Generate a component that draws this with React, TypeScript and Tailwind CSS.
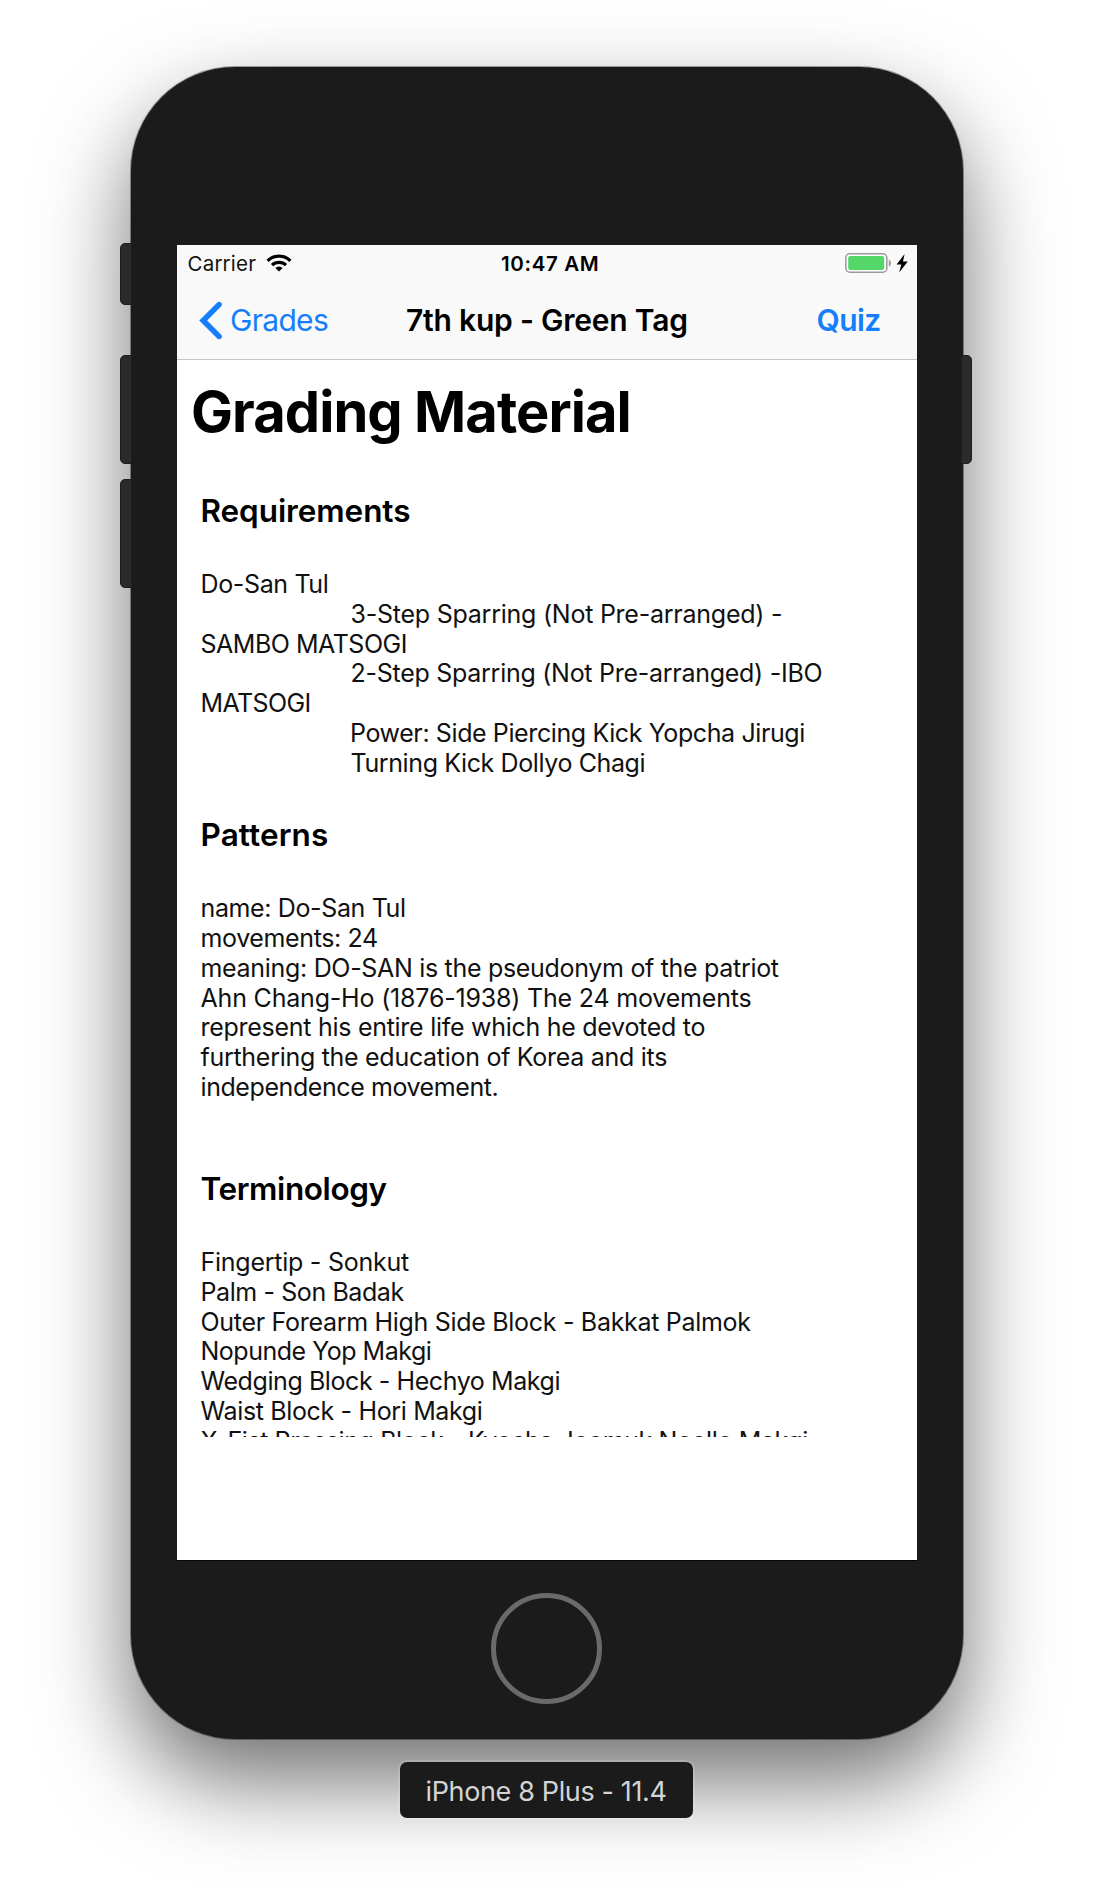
type Line = { text: string; className: string };

const requirements: Line[] = [
  { text: 'Do-San Tul', className: 'tracking-[-0.354px]' },
  { text: '3-Step Sparring (Not Pre-arranged) -', className: 'pl-[150px] tracking-[-0.239px]' },
  { text: 'SAMBO MATSOGI', className: 'tracking-[-0.486px]' },
  { text: '2-Step Sparring (Not Pre-arranged) -IBO', className: 'pl-[150px] tracking-[-0.27px]' },
  { text: 'MATSOGI', className: 'tracking-[-0.6px]' },
  { text: 'Power: Side Piercing Kick Yopcha Jirugi', className: 'pl-[149.5px] tracking-[-0.395px]' },
  { text: 'Turning Kick Dollyo Chagi', className: 'pl-[150px] tracking-[-0.391px]' },
];

const patterns: Line[] = [
  { text: 'name: Do-San Tul', className: 'tracking-[-0.367px]' },
  { text: 'movements: 24', className: 'tracking-[-0.375px]' },
  { text: 'meaning: DO-SAN is the pseudonym of the patriot', className: 'tracking-[-0.31px]' },
  { text: 'Ahn Chang-Ho (1876-1938) The 24 movements', className: 'tracking-[-0.191px]' },
  { text: 'represent his entire life which he devoted to', className: 'tracking-[-0.277px]' },
  { text: 'furthering the education of Korea and its', className: 'tracking-[-0.29px]' },
  { text: 'independence movement.', className: 'tracking-[-0.422px]' },
];

const terminology: Line[] = [
  { text: 'Fingertip - Sonkut', className: 'tracking-[-0.25px]' },
  { text: 'Palm - Son Badak', className: 'tracking-[-0.406px]' },
  { text: 'Outer Forearm High Side Block - Bakkat Palmok', className: 'tracking-[-0.3px]' },
  { text: 'Nopunde Yop Makgi', className: 'tracking-[-0.49px]' },
  { text: 'Wedging Block - Hechyo Makgi', className: 'tracking-[-0.418px]' },
  { text: 'Waist Block - Hori Makgi', className: 'tracking-[-0.35px]' },
  { text: 'X-Fist Pressing Block - Kyocha Joomuk Noollo Makgi', className: 'tracking-[-0.4px]' },
];

function Section({ title, lines, className, tracking }: { title: string; lines: Line[]; className: string; tracking: string }) {
  return (
    <section className={className}>
      <h2 className={`pl-[23.5px] text-[31.5px] leading-[40px] font-semibold ${tracking}`}>{title}</h2>
      <div className="mt-[38.9px] pl-[23.5px] text-[25px] leading-[29.8px] text-[#111]">
        {lines.map((line) => (
          <p key={line.text} className={`whitespace-nowrap ${line.className}`}>
            {line.text}
          </p>
        ))}
      </div>
    </section>
  );
}

function StatusBar() {
  return (
    <div className="flex h-[40px] items-start pt-[6px] text-[20.5px] leading-[26px] whitespace-nowrap">
      <span className="w-[79px] pl-[10.5px] tracking-[0.2px] text-[#111]">Carrier</span>
      <svg className="mt-[2.5px] ml-[10px] h-[18px] w-[26px]" viewBox="0 0 26 18" fill="none" stroke="#000">
        <path d="M1.6 6.8a16.2 16.2 0 0 1 22.8 0" strokeWidth="3.3" />
        <path d="M6 11.2a10 10 0 0 1 14 0" strokeWidth="3.2" />
        <path d="M13 17.6 9.3 13.9a5.3 5.3 0 0 1 7.4 0Z" fill="#000" stroke="none" />
      </svg>
      <span className="ml-[209px] w-[110px] font-semibold tracking-[0.65px]">10:47 AM</span>
      <svg className="mt-[2px] ml-[233.5px] h-[20px] w-[47px]" viewBox="0 0 47 20">
        <rect x="0.8" y="0.8" width="41" height="18.4" rx="4" fill="#fff" stroke="#999" strokeWidth="1.5" />
        <rect x="3.2" y="3" width="36" height="14" rx="2" fill="#53d769" />
        <path d="M43.8 6.4c2.8.7 2.8 6.5 0 7.2Z" fill="#999" />
      </svg>
      <svg className="mt-[3px] ml-[4px] h-[19px] w-[13px]" viewBox="0 0 13 19">
        <path d="M8.6 0 .6 10.4H5.3L3.2 18.6 11.8 7.6H7Z" fill="#000" />
      </svg>
    </div>
  );
}

function NavBar() {
  return (
    <div className="flex h-[74px] pt-[14px] text-[30px] leading-[42px] whitespace-nowrap">
      <button className="flex w-[229px] items-start pl-[22px] text-[#157efb]">
        <svg className="mt-[2px] h-[40px] w-[24px]" viewBox="0 0 24 40" fill="none">
          <path d="M20 3.6 4.2 19.5 20 35.4" stroke="currentColor" strokeWidth="5.6" strokeLinecap="round" />
        </svg>
        <span className="ml-[7px] tracking-[-0.7px]">Grades</span>
      </button>
      <span className="w-[410.5px] font-semibold tracking-[-0.21px]">7th kup - Green Tag</span>
      <button className="flex font-semibold tracking-[-0.55px] text-[#157efb]">Quiz</button>
    </div>
  );
}

export default function App() {
  return (
    <main className="h-[1902px] w-[1094px] overflow-hidden bg-white pt-[67px] font-['Inter',sans-serif] text-black">
      <div className="relative ml-[131px] h-[1672px] w-[832px] rounded-[104px] bg-[#1b1b1b] pt-[178px] pl-[46px] shadow-[0_0_0_1px_rgba(0,0,0,0.35),0_42px_90px_rgba(0,0,0,0.56)]">
        <span className="absolute top-[176px] -left-[11px] h-[62px] w-[12px] rounded-l-[5px] border border-[#1e1e1e] bg-[#2b2b2b]" />
        <span className="absolute top-[288px] -left-[11px] h-[109px] w-[12px] rounded-l-[5px] border border-[#1e1e1e] bg-[#2b2b2b]" />
        <span className="absolute top-[412px] -left-[11px] h-[109px] w-[12px] rounded-l-[5px] border border-[#1e1e1e] bg-[#2b2b2b]" />
        <span className="absolute top-[288px] -right-[9px] h-[109px] w-[11px] rounded-r-[5px] border border-[#1e1e1e] bg-[#2b2b2b]" />

        <div className="h-[1315px] w-[740px] bg-white shadow-[0_1px_0_#050505]">
          <header className="h-[115px] border-b border-[#c6c6c6] bg-[#f9f9f9]">
            <StatusBar />
            <NavBar />
          </header>
          <div className="h-[1077px] overflow-hidden pt-[18.3px]">
            <h1 className="pl-[14px] text-[56px] leading-[68px] font-bold tracking-[-0.93px]">Grading Material</h1>
            <Section className="mt-[44.8px]" title="Requirements" tracking="tracking-[-0.08px]" lines={requirements} />
            <Section className="mt-[36.7px]" title="Patterns" tracking="tracking-[0.1px]" lines={patterns} />
            <Section className="mt-[66.3px]" title="Terminology" tracking="tracking-[-0.4px]" lines={terminology} />
          </div>
        </div>

        <div className="mt-[33px] ml-[313.5px] size-[111px] rounded-full border-[5.5px] border-[#6a6a6a]" />
      </div>

      <div className="relative mt-[23px] ml-[400px] flex h-[56px] w-[293px] rounded-[7px] bg-[#1b1b1b] pt-[10px] pl-[25.5px] text-[27px] leading-[40px] tracking-[-0.36px] whitespace-nowrap text-[#d4d4d4] shadow-[0_0_0_2px_rgba(255,255,255,0.15)]">
        iPhone 8 Plus - 11.4
      </div>
    </main>
  );
}
